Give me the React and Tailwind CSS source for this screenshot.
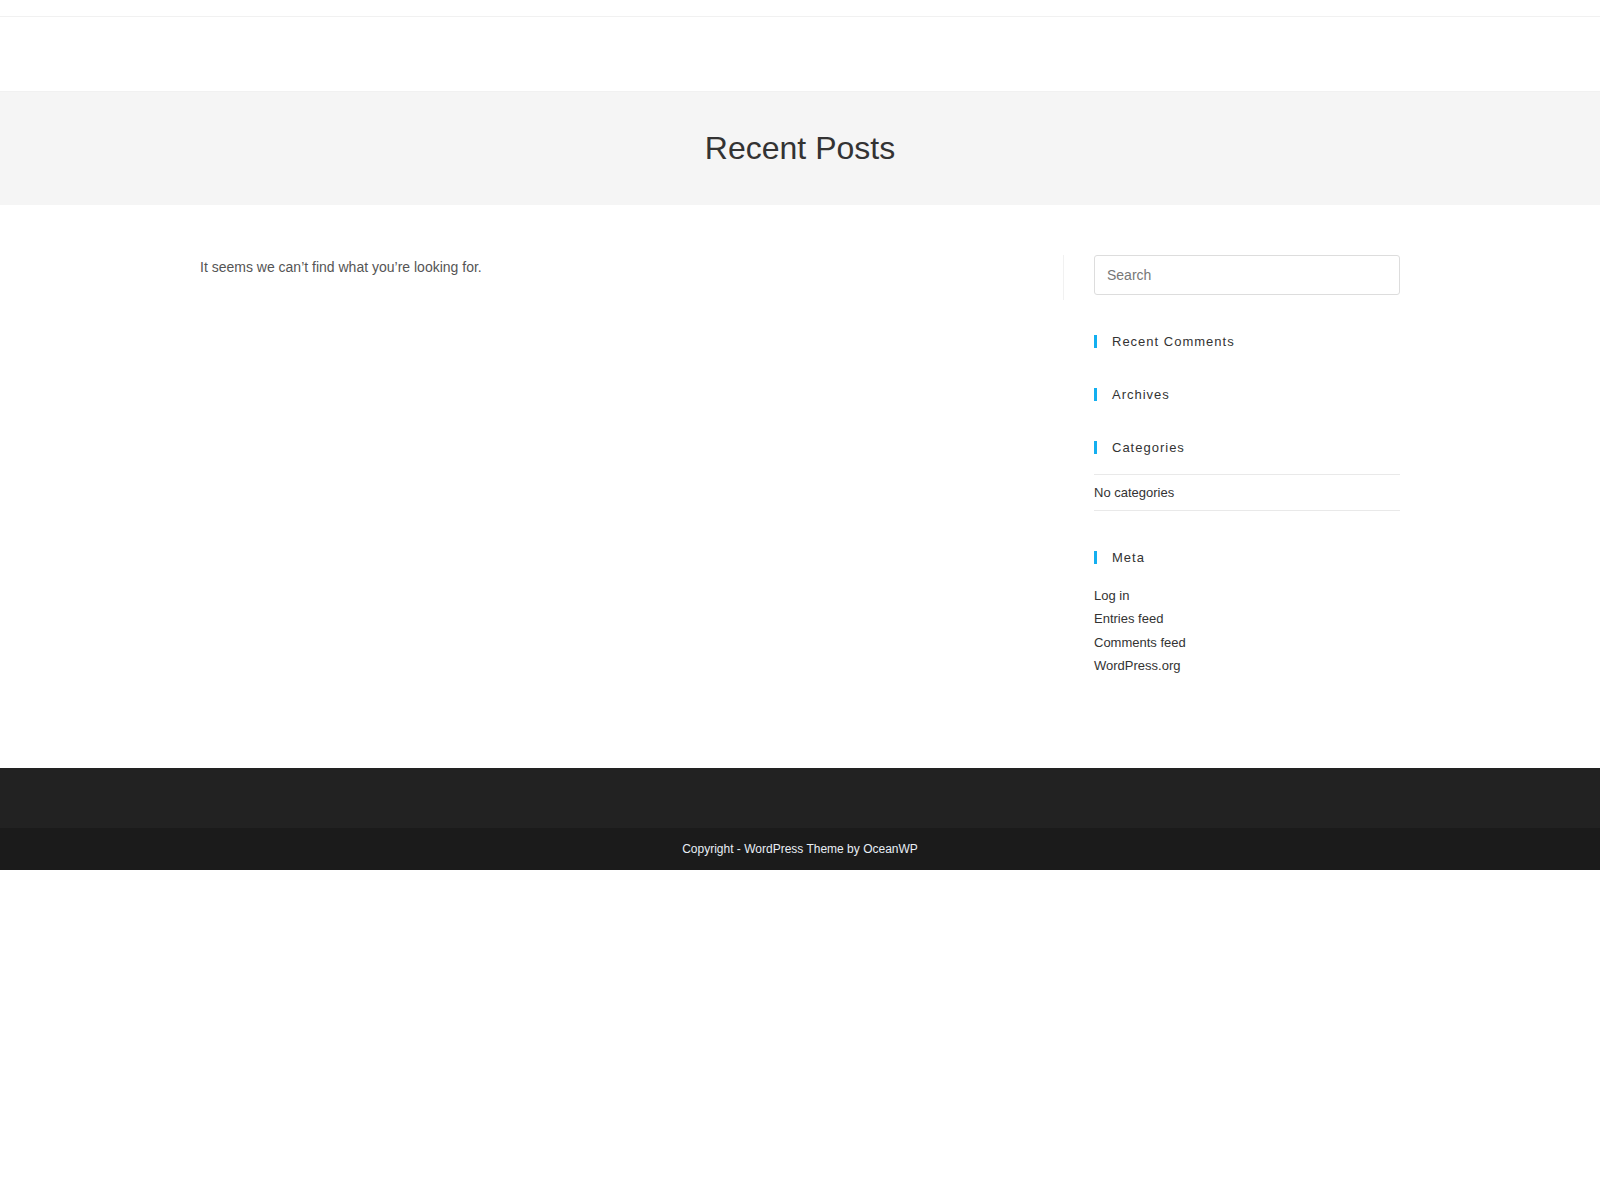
const metaLinks = ['Log in', 'Entries feed', 'Comments feed', 'WordPress.org'];

function WidgetTitle({ children }) {
  return (
    <h4 className="border-l-[3px] border-[#13aff0] pl-[15px] text-[13px] font-normal leading-none tracking-[1px] text-[#333]">
      {children}
    </h4>
  );
}

export default function App() {
  return (
    <div className="min-h-[1200px] bg-white font-['Liberation_Sans',Arial,sans-serif] text-[#555]">
      {/* top bar + site header */}
      <div className="h-[17px] border-b border-[#f1f1f1]" />
      <header className="h-[75px] border-b border-[#f1f1f1]" />

      <section className="bg-[#f5f5f5] py-[34px] text-center">
        <h1 className="text-[32px] font-normal leading-[1.4] text-[#333]">Recent Posts</h1>
      </section>

      <main className="mx-auto flex w-[1200px] items-start pb-[51px] pt-[50px]">
        <div className="w-[864px] border-r border-[#f1f1f1] pr-[30px]">
          <p className="mb-[20px] text-[14px] leading-[25px]">It seems we can’t find what you’re looking for.</p>
        </div>

        <aside className="w-[336px] pl-[30px] text-[13px] text-[#333]">
          <div className="mb-[40px]">
            <input
              type="search"
              placeholder="Search"
              className="h-[40px] w-full rounded-[3px] border border-[#ddd] px-[12px] text-[14px] text-[#333] outline-none placeholder:text-[#777]"
            />
          </div>

          <div className="mb-[40px]">
            <WidgetTitle>Recent Comments</WidgetTitle>
          </div>

          <div className="mb-[40px]">
            <WidgetTitle>Archives</WidgetTitle>
          </div>

          <div className="mb-[40px]">
            <WidgetTitle>Categories</WidgetTitle>
            <ul className="mt-[20px] border-t border-[#e9e9e9]">
              <li className="border-b border-[#e9e9e9] py-[6px] leading-[23px]">No categories</li>
            </ul>
          </div>

          <div className="mb-[40px]">
            <WidgetTitle>Meta</WidgetTitle>
            <ul className="mt-[20px]">
              {metaLinks.map((label) => (
                <li key={label} className="leading-[1.8]">
                  <a href="#" className="text-[#333]">
                    {label}
                  </a>
                </li>
              ))}
            </ul>
          </div>
        </aside>
      </main>

      <footer>
        <div className="h-[60px] bg-[#222]" />
        <div className="flex h-[42px] items-center justify-center bg-[#1b1b1b] text-[12px] text-[#e8eef5]">
          Copyright - WordPress Theme by OceanWP
        </div>
      </footer>
    </div>
  );
}
